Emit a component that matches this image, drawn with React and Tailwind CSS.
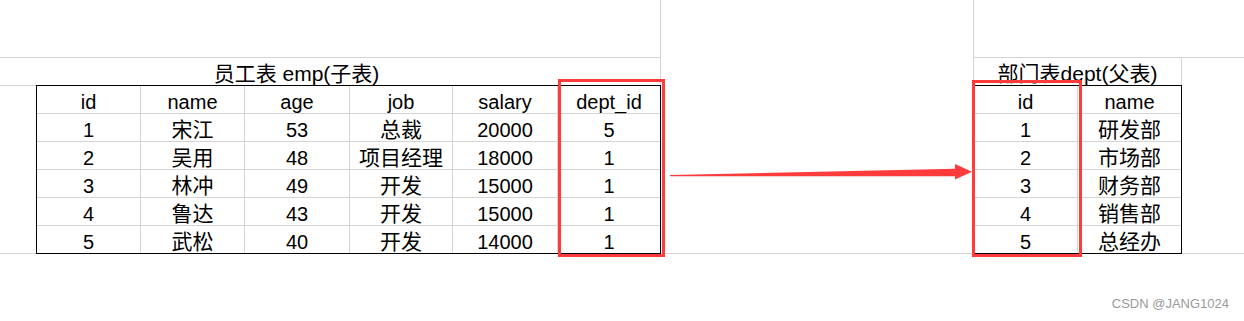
import React from "react";

const grid = "border-[#d4d4d4]";

const empHead = ["id", "name", "age", "job", "salary", "dept_id"];
const empRows = [
  ["1", "宋江", "53", "总裁", "20000", "5"],
  ["2", "吴用", "48", "项目经理", "18000", "1"],
  ["3", "林冲", "49", "开发", "15000", "1"],
  ["4", "鲁达", "43", "开发", "15000", "1"],
  ["5", "武松", "40", "开发", "14000", "1"],
];
// widths include the grid line on the right
const empWidths = ["w-[104px]", "w-[104px]", "w-[105px]", "w-[103px]", "w-[105px]", "w-[102px]"];

const deptHead = ["id", "name"];
const deptRows = [
  ["1", "研发部"],
  ["2", "市场部"],
  ["3", "财务部"],
  ["4", "销售部"],
  ["5", "总经办"],
];
const deptWidths = ["w-[104px]", "w-[103px]"];

const hasCjk = (s) => /[\u4e00-\u9fff]/.test(s);

function Cell({ width, last, children }) {
  return (
    <div
      className={`${width} flex items-end justify-center leading-[22px] ${
        hasCjk(children) ? "text-[21px]" : "text-[20px]"
      } ${last ? "" : `border-r ${grid}`}`}
    >
      {children}
    </div>
  );
}

function Sheet({ head, rows, widths, className }) {
  const all = [head, ...rows];
  return (
    <div className={`${className} flex flex-col border border-black`}>
      {all.map((row, i) => {
        const lastRow = i === all.length - 1;
        return (
          <div
            key={i}
            className={`flex ${lastRow ? "h-[27px]" : `h-[28px] border-b ${grid}`}`}
          >
            {row.map((v, j) => (
              <Cell key={j} width={widths[j]} last={j === row.length - 1}>
                {v}
              </Cell>
            ))}
          </div>
        );
      })}
    </div>
  );
}

export default function App() {
  return (
    <div className="relative w-[1244px] h-[321px] overflow-hidden bg-white text-black flex font-['Liberation_Sans','Noto_Sans_CJK_SC',sans-serif]">
      {/* left block: emp */}
      <div className="w-[661px] flex flex-col">
        <div className={`h-[58px] border-r border-b ${grid}`} />
        <div className="h-[27px] flex">
          <div className="w-[557px] pl-[36px] flex items-end justify-center leading-[22px] text-[21px]">
            员工表 emp(子表)
          </div>
          <div className={`flex-1 border-r ${grid}`} />
        </div>
        <div className="h-[169px] flex">
          <div className={`w-[36px] border-t border-b ${grid}`} />
          <Sheet head={empHead} rows={empRows} widths={empWidths} className="w-[625px] h-[169px]" />
        </div>
      </div>

      {/* gap between the tables */}
      <div className="w-[312px] flex flex-col">
        <div className={`h-[254px] border-b ${grid}`} />
      </div>

      {/* right block: dept */}
      <div className="w-[271px] flex flex-col">
        <div className={`h-[58px] border-l border-b ${grid}`} />
        <div className="h-[27px] flex">
          <div className={`w-[209px] border-l border-r ${grid} flex items-end justify-center leading-[22px] text-[21px]`}>
            部门表dept(父表)
          </div>
        </div>
        <div className="h-[169px] flex">
          <Sheet head={deptHead} rows={deptRows} widths={deptWidths} className="w-[209px] h-[169px]" />
          <div className={`flex-1 border-b ${grid}`} />
        </div>
      </div>

      {/* red highlight boxes */}
      <div className="absolute left-[558px] top-[79px] w-[107px] h-[178px] border-[3px] border-[#ff3b3b]" />
      <div className="absolute left-[972px] top-[80px] w-[110px] h-[177px] border-[3px] border-[#ff3b3b]" />

      {/* arrow */}
      <svg className="absolute left-[668px] top-[160px]" width="310" height="24" viewBox="0 0 310 24">
        <polygon
          points="2,15 287,8.8 287,4 304,11.7 287,19.5 287,16.2 2,16.2"
          fill="#ff3b3b"
        />
      </svg>

      <div className="absolute right-[15px] bottom-[8px] text-[13px] text-[#999] font-['Liberation_Sans',sans-serif]">
        CSDN @JANG1024
      </div>
    </div>
  );
}
